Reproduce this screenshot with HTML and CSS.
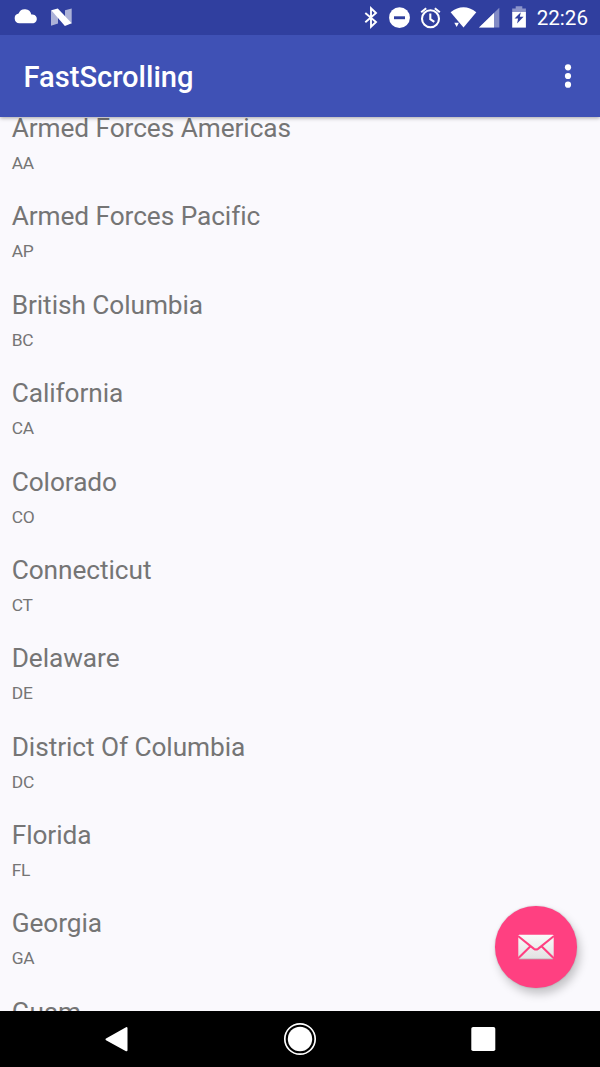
FILE: index.html
```
<!DOCTYPE html>
<html lang="en">
<head>
<meta charset="utf-8">
<title>FastScrolling</title>
<link rel="stylesheet" href="styles.css">
</head>
<body>
<div class="screen">
  <header class="top">
    <div class="status">
      <svg class="status-icons" width="600" height="35" viewBox="0 0 600 35" fill="#fff">
        <path d="M19.500 23.200a4.900 4.900 0 0 1-.9-9.700A6.600 6.600 0 0 1 31.300 14.600A4.400 4.400 0 0 1 33.500 23.200z"/>
        <path d="M51 10.300l7 1.800v11.500l-7 2.200zM65 10.300l6.700-1.700v15l-6.700-1.500z" opacity=".6"/>
        <path d="M51.300 10.200l6.500-1.700 13.900 14.800-6.800 2.700z"/>
        <path d="M365.300 13l10.700 9-5 4.700V8.200L376 13l-10.700 9.300" fill="none" stroke="#fff" stroke-width="1.900"/>
        <circle cx="399.500" cy="17.700" r="10.400"/>
        <rect x="394" y="16.300" width="11" height="2.900" fill="#303f9f"/>
        <g fill="none" stroke="#fff" stroke-width="2.100">
          <circle cx="430.500" cy="18.700" r="8.500"/>
          <path d="M430.300 13.500v5.700l4 2.700M421.200 12.300l5-4M439.800 12.300l-5-4"/>
        </g>
        <path d="M450.600 12.200Q463.500 2.500 476.300 12.200L463.500 27.400z"/>
        <path d="M454.300 22.800h4.600l-2.200 4.300z"/>
        <path d="M499.300 7.800V27.600H479z" opacity=".4"/>
        <path d="M494 13v14.600h-15z"/>
        <path d="M515.700 6.300h6.600v2.200h3.600v4h-13.700v-4h3.500z" opacity=".45"/>
        <path d="M512.200 12h13.700v15.600h-13.700z"/>
        <path d="M520.800 12.200l-6.300 6.300h3.600l-1 5 6.500-6.800h-3.800z" fill="#303f9f"/>
      </svg>
      <span class="clock">22:26</span>
    </div>
    <div class="appbar">
      <h1 class="title">FastScrolling</h1>
      <svg class="more" width="8" height="26" viewBox="0 0 8 26" fill="#fff"><circle cx="4" cy="4.300" r="3.100"/><circle cx="4" cy="13" r="3.100"/><circle cx="4" cy="21.700" r="3.100"/></svg>
    </div>
  </header>
  <main class="content">
    <ul class="list">
      <li class="row"><div class="name">Armed Forces Americas</div><div class="code">AA</div></li>
      <li class="row"><div class="name">Armed Forces Pacific</div><div class="code">AP</div></li>
      <li class="row"><div class="name">British Columbia</div><div class="code">BC</div></li>
      <li class="row"><div class="name">California</div><div class="code">CA</div></li>
      <li class="row"><div class="name">Colorado</div><div class="code">CO</div></li>
      <li class="row"><div class="name">Connecticut</div><div class="code">CT</div></li>
      <li class="row"><div class="name">Delaware</div><div class="code">DE</div></li>
      <li class="row"><div class="name">District Of Columbia</div><div class="code">DC</div></li>
      <li class="row"><div class="name">Florida</div><div class="code">FL</div></li>
      <li class="row"><div class="name">Georgia</div><div class="code">GA</div></li>
      <li class="row"><div class="name">Guam</div><div class="code">GU</div></li>
    </ul>
    <div class="fab">
      <svg width="36" height="26" viewBox="0 0 36 26">
        <defs><linearGradient id="paper" x1="0" y1="0" x2="0" y2="1"><stop offset="0" stop-color="#fafafa"/><stop offset="1" stop-color="#e2e2e2"/></linearGradient></defs>
        <rect x=".3" y=".8" width="35.400" height="24.200" rx="1" fill="url(#paper)"/>
        <path d="M0 2L16 14.800Q18 16.200 20 14.800L36 2M0 24.400L12.500 12.200M36 24.400L23.500 12.200" fill="none" stroke="#ff4081" stroke-width="2.100"/>
        <path d="M1 25h34" stroke="#b8a8ad" stroke-width=".8"/>
      </svg>
    </div>
  </main>
  <nav class="navbar">
    <svg width="600" height="56" viewBox="0 0 600 56" fill="#fff">
      <path d="M106.500 28.300L126.500 17v22.300z" stroke="#fff" stroke-width="2" stroke-linejoin="round"/>
      <circle cx="300" cy="28" r="12.200"/>
      <circle cx="300" cy="28" r="15.200" fill="none" stroke="#fff" stroke-width="1.700"/>
      <rect x="471.300" y="16" width="24" height="24" rx="1.800"/>
    </svg>
  </nav>
</div>
</body>
</html>
```
FILE: styles.css
```
body {
  margin: 0;
  font-family: Roboto, "Liberation Sans", sans-serif;
}
.screen {
  display: flex;
  flex-direction: column;
  width: 600px;
  height: 1067px;
  overflow: hidden;
  background: #faf9fd;
}
.top {
  position: relative;
  z-index: 1;
  flex: none;
  color: #fff;
  box-shadow: 0 1px 4px rgba(0, 0, 0, .35);
}
.status {
  display: grid;
  height: 35px;
  background: #303f9f;
}
.status-icons, .clock {
  grid-area: 1 / 1;
}
.clock {
  justify-self: end;
  padding-right: 12px;
  font-size: 20.600px;
  line-height: 37px;
}
.appbar {
  display: flex;
  align-items: center;
  justify-content: space-between;
  box-sizing: border-box;
  height: 81.500px;
  padding: 0 28px 0 23.500px;
  background: #3f51b5;
}
.title {
  margin: 0;
  padding-top: 2px;
  font-size: 29.100px;
  font-weight: 500;
  line-height: 34px;
}
.content {
  position: relative;
  flex: 1;
  min-height: 0;
  overflow: hidden;
}
.list {
  margin: -4.500px 0 0;
  padding: 0;
  list-style: none;
}
.row {
  box-sizing: border-box;
  height: 88.375px;
  padding-left: 11.700px;
  color: #757575;
}
.name {
  font-size: 26.250px;
  line-height: 32px;
  letter-spacing: -.07px;
}
.code {
  margin-top: 9px;
  font-size: 17.400px;
  line-height: 20px;
  letter-spacing: -.2px;
}
.fab {
  position: absolute;
  right: 23.500px;
  bottom: 23.300px;
  display: flex;
  align-items: center;
  justify-content: center;
  width: 81.500px;
  height: 81.500px;
  border-radius: 50%;
  background: #ff4081;
  box-shadow: 3px 6px 10px rgba(0, 0, 0, .22), 0 0 2px rgba(0, 0, 0, .2);
}
.navbar {
  flex: none;
  height: 56px;
  background: #000;
}
```
